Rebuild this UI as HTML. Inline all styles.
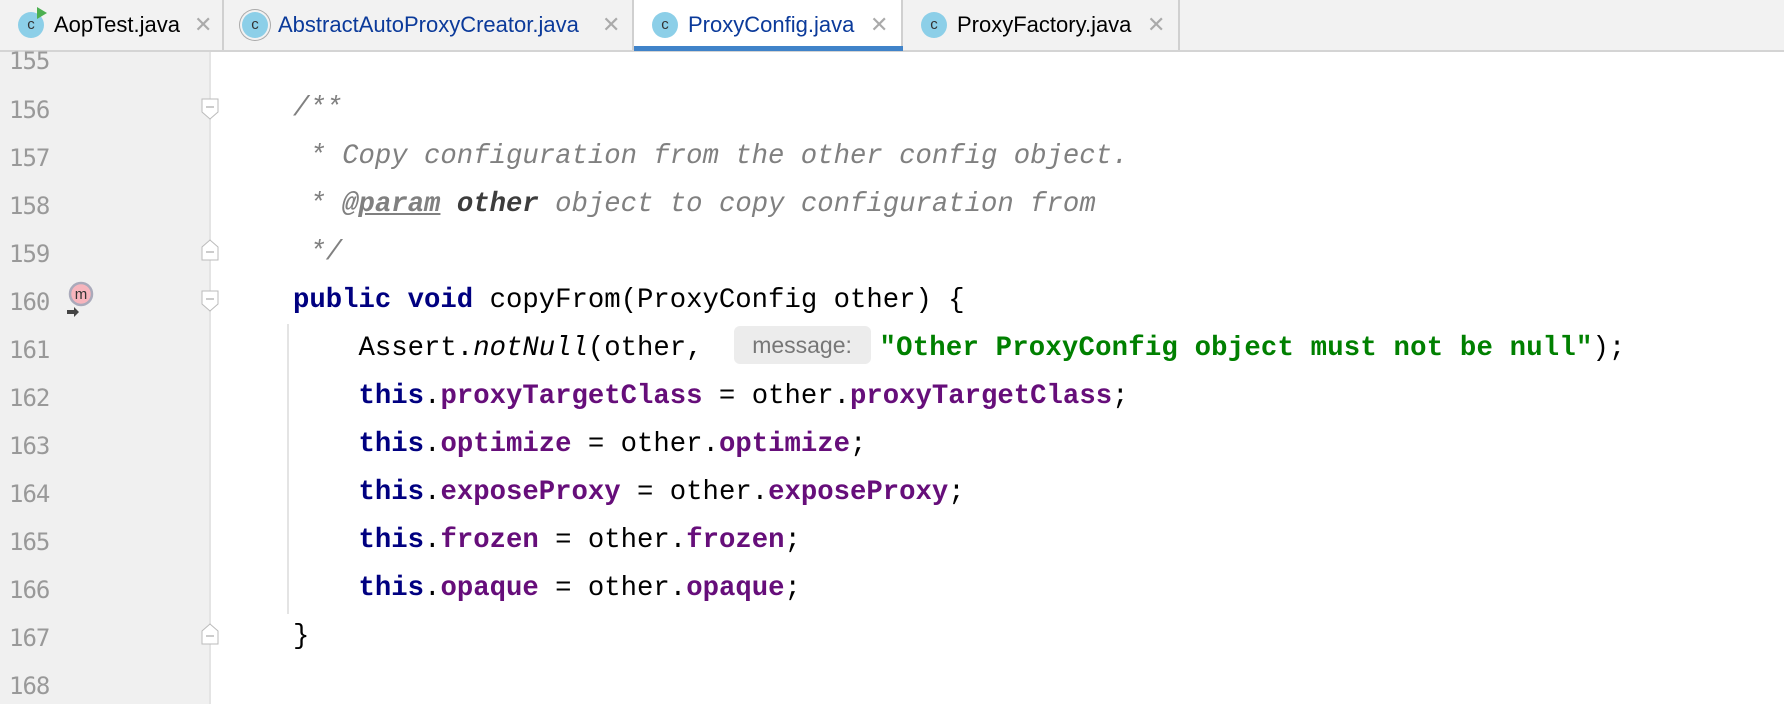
<!DOCTYPE html>
<html><head><meta charset="utf-8"><style>
*{margin:0;padding:0;box-sizing:border-box}
body{width:1784px;height:704px;overflow:hidden;background:#fff;font-family:"Liberation Sans",sans-serif;position:relative}
.tabs{position:absolute;left:0;top:0;width:1784px;height:52px;background:#f2f2f2;border-bottom:2px solid #d4d4d4}
.tab{position:absolute;top:0;height:50px;border-right:2px solid #d0d0d0;font-size:22px;line-height:50px;color:#000}
.tab .ic{position:absolute;left:18px;top:12px;width:26px;height:26px;border-radius:50%;background:#8ccfe8;color:#333;font-size:15px;line-height:26px;text-align:center}
.tab .nm{position:absolute;left:54px;top:0}
.tab .x{position:absolute;top:0;color:#aaa;font-size:22px}
.gutter{position:absolute;left:0;top:52px;width:211px;height:652px;background:#f0f0f0;border-right:2px solid #e4e4e4}
.ln{position:absolute;left:9px;font-size:24px;color:#999;font-family:"DejaVu Sans Mono","Liberation Mono",monospace;width:60px;height:48px;line-height:48px;letter-spacing:-1px}
.code{position:absolute;left:293px;font-family:"Liberation Mono",monospace;font-size:27.3px;height:48px;line-height:48px;white-space:pre;color:#000}
.k{color:#000080;font-weight:bold}.f{color:#660e7a;font-weight:bold}.s{color:#008000;font-weight:bold;letter-spacing:0.2px}.c{color:#808080;font-style:italic}
.hint{display:inline-block;background:#ececec;color:#777;font-family:"Liberation Sans",sans-serif;font-size:23px;font-style:normal;border-radius:6px;width:137px;text-align:center;margin-left:31px;margin-right:9px;line-height:38px;height:38px;vertical-align:2px}
.fold{position:absolute;left:201px;width:18px;height:22px}
</style></head><body>
<div class="tabs">
 <div class="tab" style="left:0;width:224px"><div class="ic">c</div><svg style="position:absolute;left:36px;top:6px" width="12" height="14"><path d="M1 1L11 7L1 13Z" fill="#4caf50"/></svg><span class="nm">AopTest.java</span><span class="x" style="left:194px">✕</span></div>
 <div class="tab" style="left:224px;width:410px;color:#0b3a9a"><div class="ic" style="box-shadow:0 0 0 2px #f2f2f2,0 0 0 3px #aaa">c</div><span class="nm">AbstractAutoProxyCreator.java</span><span class="x" style="left:378px">✕</span></div>
 <div class="tab" style="left:634px;width:269px;background:#fff;color:#0b3a9a"><div class="ic">c</div><span class="nm">ProxyConfig.java</span><span class="x" style="left:236px">✕</span><div style="position:absolute;left:0;right:-2px;top:46px;height:5px;background:#4083c9"></div></div>
 <div class="tab" style="left:903px;width:277px"><div class="ic">c</div><span class="nm">ProxyFactory.java</span><span class="x" style="left:244px">✕</span></div>
</div>
<div class="gutter"></div>
<div style="position:absolute;left:287px;top:324px;width:2px;height:290px;background:#e4e4e4"></div>
<div class="ln" style="top:37px">155</div>
<div class="ln" style="top:86px">156</div>
<div class="ln" style="top:134px">157</div>
<div class="ln" style="top:182px">158</div>
<div class="ln" style="top:230px">159</div>
<div class="ln" style="top:278px">160</div>
<div class="ln" style="top:326px">161</div>
<div class="ln" style="top:374px">162</div>
<div class="ln" style="top:422px">163</div>
<div class="ln" style="top:470px">164</div>
<div class="ln" style="top:518px">165</div>
<div class="ln" style="top:566px">166</div>
<div class="ln" style="top:614px">167</div>
<div class="ln" style="top:662px">168</div>
<svg class="fold" style="top:98px"><path d="M1 1H17V14L9 21L1 14Z" fill="#fff" stroke="#bbb"/><path d="M5 9H13" stroke="#999"/></svg>
<svg class="fold" style="top:239px"><path d="M1 21H17V8L9 1L1 8Z" fill="#fff" stroke="#bbb"/><path d="M5 13H13" stroke="#999"/></svg>
<svg class="fold" style="top:290px"><path d="M1 1H17V14L9 21L1 14Z" fill="#fff" stroke="#bbb"/><path d="M5 9H13" stroke="#999"/></svg>
<svg class="fold" style="top:623px"><path d="M1 21H17V8L9 1L1 8Z" fill="#fff" stroke="#bbb"/><path d="M5 13H13" stroke="#999"/></svg>
<svg style="position:absolute;left:64px;top:281px" width="34" height="40"><circle cx="17" cy="13" r="11" fill="#f7b5bd" stroke="#aab" stroke-width="2.5"/><text x="17" y="18" font-family="Liberation Sans" font-size="15" text-anchor="middle" fill="#333">m</text><path d="M3 29H10V26L15 31L10 36V33H3Z" fill="#444"/></svg>
<div class="code c" style="top:85px">/**</div>
<div class="code c" style="top:133px"> * Copy configuration from the other config object.</div>
<div class="code c" style="top:181px"> * <b style="text-decoration:underline">@param</b> <b style="color:#3d3d3d">other</b> object to copy configuration from</div>
<div class="code c" style="top:229px"> */</div>
<div class="code" style="top:277px"><span class="k">public void</span> copyFrom(ProxyConfig other) {</div>
<div class="code" style="top:325px">    Assert.<i>notNull</i>(other,<span class="hint">message:</span><span class="s">"Other ProxyConfig object must not be null"</span>);</div>
<div class="code" style="top:373px">    <span class="k">this</span>.<span class="f">proxyTargetClass</span> = other.<span class="f">proxyTargetClass</span>;</div>
<div class="code" style="top:421px">    <span class="k">this</span>.<span class="f">optimize</span> = other.<span class="f">optimize</span>;</div>
<div class="code" style="top:469px">    <span class="k">this</span>.<span class="f">exposeProxy</span> = other.<span class="f">exposeProxy</span>;</div>
<div class="code" style="top:517px">    <span class="k">this</span>.<span class="f">frozen</span> = other.<span class="f">frozen</span>;</div>
<div class="code" style="top:565px">    <span class="k">this</span>.<span class="f">opaque</span> = other.<span class="f">opaque</span>;</div>
<div class="code" style="top:613px">}</div>
</body></html>
